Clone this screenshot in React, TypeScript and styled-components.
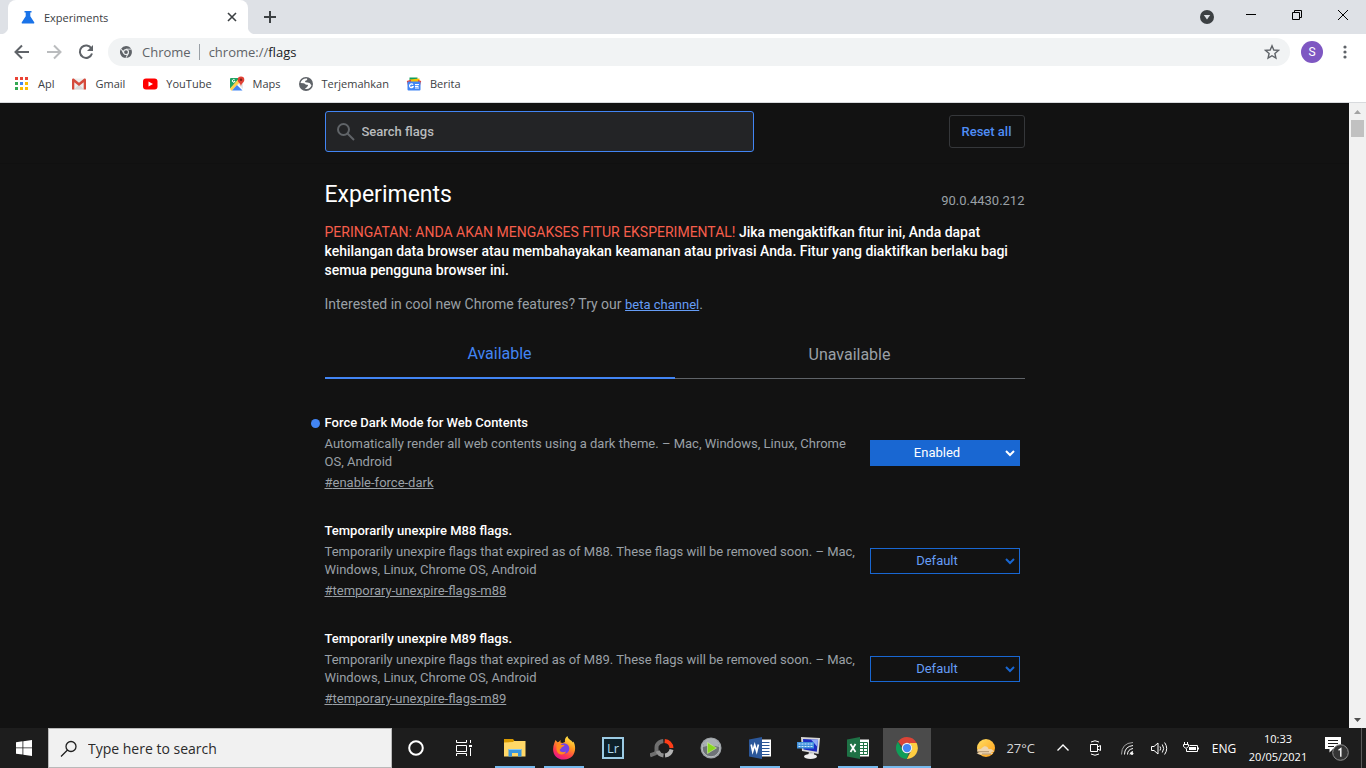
import React from "react";
import styled, { createGlobalStyle, css } from "styled-components";

const ui = `"Open Sans", "Noto Sans", sans-serif`;
const roboto = `Roboto, "Liberation Sans", sans-serif`;

const GlobalStyle = createGlobalStyle`
  * { box-sizing: border-box; }
  html, body, #root { height: 100%; margin: 0; }
  body { overflow: hidden; background: #121212; }
  button, input, select { font: inherit; color: inherit; }
  button { border: 0; padding: 0; background: none; }
  svg { display: block; flex: none; }
`;

const Screen = styled.div`
  height: 100vh;
  display: flex;
  flex-direction: column;
  font-family: ${ui};
`;

/* ---------- browser frame ---------- */

const TabStrip = styled.header`
  display: flex;
  height: 34px;
  flex: none;
  background: #dee1e6;
  color: #3c4043;
  font-size: 11px;
`;

const StripEdge = styled.div<{ $side: "left" | "right" }>`
  width: 8px;
  background: radial-gradient(
    circle at ${(p) => (p.$side === "left" ? "0 26px" : "8px 26px")},
    #dee1e6 8px,
    #ffffff 9px
  );
  background-clip: content-box;
  padding-top: 26px;
  background-origin: border-box;
`;

const Tab = styled.div`
  display: flex;
  align-items: center;
  width: 240px;
  padding: 0 10px 0 13px;
  gap: 9px;
  border-radius: 8px 8px 0 0;
  background: #ffffff;
`;

const TabTitle = styled.span`
  flex: 1;
`;

const StripButton = styled.button<{ $width: number }>`
  width: ${(p) => p.$width}px;
  display: flex;
  align-items: center;
  justify-content: center;
`;

const WindowButtons = styled.div`
  display: flex;
  margin-left: auto;
  height: 30px;
`;

const Toolbar = styled.div`
  display: flex;
  align-items: center;
  height: 36px;
  flex: none;
  padding: 0 14px;
  background: #ffffff;
`;

const NavButtons = styled.nav`
  display: flex;
  gap: 16px;
  margin-right: 14px;
`;

const Omnibox = styled.div`
  display: flex;
  align-items: center;
  flex: 1;
  height: 28px;
  padding: 0 10px 0 12px;
  border-radius: 14px;
  background: #f1f3f4;
  color: #5f6368;
  font-size: 13px;
`;

const SiteName = styled.span`
  margin-left: 10px;
  padding-right: 8px;
  line-height: 16px;
  border-right: 1px solid #9aa0a6;
`;

const Url = styled.span`
  flex: 1;
  margin-left: 9px;
  b {
    font-weight: 400;
    color: #202124;
  }
`;

const Avatar = styled.button`
  width: 22px;
  height: 22px;
  margin: 0 15px 0 11px;
  border-radius: 50%;
  background: #7e57c2;
  color: #ffffff;
  font-family: ${roboto};
  font-size: 12px;
`;

const Bookmarks = styled.nav`
  display: flex;
  align-items: center;
  height: 33px;
  flex: none;
  gap: 17px;
  padding: 0 14px 5px;
  background: #ffffff;
  border-bottom: 1px solid #d8dadd;
  color: #3c4043;
  font-size: 11px;
`;

const Bookmark = styled.a`
  display: flex;
  align-items: center;
  gap: 8px;
  color: inherit;
  text-decoration: none;
`;

/* ---------- flags page ---------- */

const Viewport = styled.div`
  display: flex;
  flex: 1;
  min-height: 0;
`;

const Page = styled.main`
  flex: 1;
  overflow: hidden;
  background: #121212;
  color: #9aa0a6;
  font-family: ${roboto};
`;

const Column = styled.div`
  width: 100%;
  max-width: 700px;
  margin: 0 auto;
`;

const SearchHeader = styled.div`
  padding: 8px 0 11px;
  border-bottom: 1px solid #101010;
`;

const SearchRow = styled(Column)`
  display: flex;
  align-items: center;
  justify-content: space-between;
`;

const SearchBox = styled.label`
  display: flex;
  align-items: center;
  gap: 6px;
  width: 429px;
  height: 41px;
  padding-left: 10px;
  border: 1px solid #4285f4;
  border-radius: 3px;
  background: #232426;
  color: #606468;
  input {
    flex: 1;
    min-width: 0;
    padding: 0;
    border: 0;
    outline: 0;
    background: none;
    color: #c4c7c9;
    font-size: 13px;
    font-weight: 500;
  }
  input::placeholder {
    color: #b9bbbd;
    opacity: 1;
  }
`;

const ResetButton = styled.button`
  width: 76px;
  height: 33px;
  border: 1px solid #35373a;
  border-radius: 3px;
  color: #4f8df5;
  font-size: 13px;
  font-weight: 500;
`;

const TitleRow = styled.div`
  display: flex;
  justify-content: space-between;
  align-items: flex-end;
  padding-top: 17px;
`;

const Title = styled.h1`
  margin: 0;
  color: #ffffff;
  font-size: 23px;
  line-height: 28px;
  font-weight: 400;
`;

const Version = styled.span`
  font-size: 13px;
  line-height: 16px;
`;

const Warning = styled.p`
  margin: 14px 0 0;
  color: #ffffff;
  font-size: 14px;
  line-height: 19px;
  font-weight: 500;
  span {
    color: #f75e4c;
    font-weight: 400;
  }
`;

const Promo = styled.p`
  margin: 15px 0 0;
  font-size: 14px;
  line-height: 19px;
  a {
    color: #669df6;
    font-size: 13px;
  }
`;

const Tabs = styled.div`
  display: flex;
  margin-top: 18px;
`;

const PageTab = styled.button<{ $active?: boolean }>`
  flex: 1;
  height: 47px;
  padding-bottom: 2px;
  font-size: 16px;
  ${(p) =>
    p.$active
      ? css`
          color: #4285f4;
          border-bottom: 2px solid #4285f4;
        `
      : css`
          color: #9aa0a6;
          border-bottom: 1px solid #5f6368;
        `}
`;

const FlagList = styled.div`
  padding-top: 35px;
`;

const Flag = styled.section`
  position: relative;
  display: flex;
  align-items: center;
  justify-content: space-between;
  margin-bottom: 30px;
  padding-right: 5px;
`;

const ChangedDot = styled.span`
  position: absolute;
  left: -14px;
  top: 5px;
  width: 9px;
  height: 9px;
  border-radius: 50%;
  background: #4285f4;
`;

const FlagText = styled.div`
  width: 534px;
  font-size: 13px;
  line-height: 18px;
  h2 {
    margin: 0 0 3px;
    color: #ffffff;
    font-size: 13px;
    line-height: 18px;
    font-weight: 500;
  }
  p {
    margin: 0 0 3px;
  }
  a {
    color: inherit;
  }
`;

const SelectWrap = styled.div<{ $changed?: boolean }>`
  position: relative;
  margin-bottom: 1px;
  color: ${(p) => (p.$changed ? "#ffffff" : "#1967d2")};
  svg {
    position: absolute;
    right: 4px;
    top: 8px;
    pointer-events: none;
  }
`;

const FlagSelect = styled.select<{ $changed?: boolean }>`
  display: block;
  appearance: none;
  width: 150px;
  height: 26px;
  padding: 0 15px 0 0;
  border: 1px solid #1967d2;
  border-radius: 0;
  background: ${(p) => (p.$changed ? "#1967d2" : "#121212")};
  color: ${(p) => (p.$changed ? "#ffffff" : "#669df6")};
  font-size: 13px;
  text-align: center;
  text-align-last: center;
`;

const Scrollbar = styled.div`
  display: flex;
  flex-direction: column;
  align-items: center;
  width: 17px;
  background: #f1f1f1;
`;

const ScrollArrow = styled.button`
  display: flex;
  align-items: center;
  justify-content: center;
  width: 17px;
  height: 17px;
`;

const Thumb = styled.div`
  width: 13px;
  height: 17px;
  margin-bottom: auto;
  background: #c1c1c1;
`;

/* ---------- taskbar ---------- */

const Taskbar = styled.footer`
  display: flex;
  height: 40px;
  flex: none;
  background: #1d1d1d;
  color: #ffffff;
`;

const TaskButton = styled.button<{ $running?: boolean; $active?: boolean }>`
  display: flex;
  align-items: center;
  justify-content: center;
  width: 48px;
  background: ${(p) => (p.$active ? "#4b4b4b" : "none")};
  ${(p) =>
    p.$running &&
    css`
      background: linear-gradient(#76b9ed, #76b9ed) 50% 100% / 40px 2px no-repeat;
    `}
  ${(p) => p.$active && css`box-shadow: inset 0 -2px #76b9ed;`}
`;

const TaskSearch = styled.label`
  display: flex;
  align-items: center;
  gap: 11px;
  width: 344px;
  padding-left: 11px;
  border: 1px solid #b9b9b9;
  background: #f1f1f1;
  color: #202020;
  input {
    flex: 1;
    min-width: 0;
    border: 0;
    padding: 0;
    outline: 0;
    background: none;
    font-size: 14px;
  }
  input::placeholder {
    color: #2b2b2b;
    opacity: 1;
  }
`;

const Apps = styled.div`
  display: flex;
  gap: 1px;
  margin-left: 3px;
`;

const Tray = styled.div`
  display: flex;
  align-items: center;
  margin-left: auto;
  font-size: 12px;
`;

const TrayButton = styled.button`
  display: flex;
  align-items: center;
  justify-content: center;
  width: 32px;
  height: 40px;
`;

const Weather = styled.button`
  display: flex;
  align-items: center;
  gap: 9px;
  margin-right: 12px;
  color: #d6d6d6;
  font-size: 13px;
`;

const Language = styled.button`
  width: 34px;
  font-size: 12px;
`;

const Clock = styled.button`
  width: 74px;
  font-size: 11px;
  line-height: 18px;
`;

const Notice = styled(TrayButton)`
  width: 47px;
  margin-right: 4px;
  padding: 2px 2px 0 0;
  border-right: 1px solid #5a5a5a;
`;

/* ---------- drawings ---------- */

const ChromeLogo = ({ size, mono }: { size: number; mono?: boolean }) => {
  const c = mono
    ? { r: "#5f6368", g: "#5f6368", y: "#5f6368", b: "#5f6368", w: "#f1f3f4" }
    : { r: "#db4437", g: "#0f9d58", y: "#ffcd40", b: "#4285f4", w: "#f1f1f1" };
  return (
    <svg width={size} height={size} viewBox="0 0 48 48">
      <path fill={c.r} d="M24 0a24 24 0 0 1 21 13H24a11 11 0 0 0-10.300 7.200L4.200 10.500A24 24 0 0 1 24 0Z" />
      <path fill={c.y} d="M45 13A24 24 0 0 1 23.500 48l10-18.500A11 11 0 0 0 30 15V13Z" />
      <path fill={c.g} d="M4.200 10.500 14.500 29.500A11 11 0 0 0 27.500 34.500L23.500 48A24 24 0 0 1 4.200 10.500Z" />
      {mono && (
        <path d="M24 12.500H45M14 29.500 4 11M34 29.500 23.500 48" stroke={c.w} strokeWidth="3" fill="none" />
      )}
      <circle cx="24" cy="24" r="11.500" fill={c.w} />
      <circle cx="24" cy="24" r={mono ? 7.5 : 9} fill={c.b} />
    </svg>
  );
};

const Flask = () => (
  <svg width="14" height="14" viewBox="0 0 14 14" fill="#1a73e8">
    <path d="M3.500 1h7v1.500H9.300v3.700l3.900 6c.4.800 0 1.300-.8 1.300H1.600c-.8 0-1.200-.5-.8-1.300l3.900-6V2.500H3.500Z" />
  </svg>
);

const AppsGrid = () => (
  <svg width="16" height="16" viewBox="0 0 16 16" shapeRendering="crispEdges">
    {["#ea4335", "#ea4335", "#ea4335", "#34a853", "#4285f4", "#fbbc04", "#34a853", "#fbbc04", "#fbbc04"].map((f, i) => (
      <rect key={i} x={(i % 3) * 5 + 1} y={Math.floor(i / 3) * 5 + 1} width="3" height="3" fill={f} />
    ))}
  </svg>
);

const Gmail = () => (
  <svg width="16" height="16" viewBox="0 0 16 16">
    <path fill="#eeeeee" d="M2 2.500h12v11H2z" />
    <path fill="#d9d9d9" d="m3 13.500 5-5 5 5z" />
    <path fill="#d54b3d" d="M1 4c0-1.300 1-1.800 2-1.200l5 4 5-4c1-.6 2-.1 2 1.200v9.500h-2.300V6.200L8 10 3.300 6.200v7.300H1z" />
  </svg>
);

const YouTube = () => (
  <svg width="16" height="16" viewBox="0 0 16 16">
    <rect x="1" y="2.500" width="14.500" height="11" rx="3" fill="#ff0000" />
    <path fill="#fff" d="M6.500 5.500v5L11 8z" />
  </svg>
);

const MapsIcon = () => (
  <svg width="16" height="16" viewBox="0 0 16 16">
    <path fill="#1fa463" d="M1 3a1 1 0 0 1 1-1h9L1 13z" />
    <path fill="#e8e8e8" d="m11 2 3 0v11L8 7.500 2 14l-1-1z" />
    <path fill="#ffd04c" d="M1 12.500 9.500 3l2 2.500L3 14.500H2z" />
    <path fill="#4285f4" d="m8 9 5.500 5.500H3z" />
    <path fill="none" stroke="#fff" d="M5.800 4A1.400 1.400 0 1 0 6 5.500H4.700" />
    <path fill="#e24134" d="M12 .5a3.300 3.300 0 0 1 3.300 3.300C15.300 6.500 12.500 7 12 10.500 11.500 7 8.700 6.500 8.700 3.800A3.300 3.300 0 0 1 12 .5Z" />
    <circle cx="12" cy="3.800" r="1.200" fill="#7c2018" />
  </svg>
);

const Globe = () => (
  <svg width="16" height="16" viewBox="0 0 16 16">
    <circle cx="8" cy="8" r="7" fill="#5f6368" />
    <path fill="#fff" d="M9 2.500C6 2 3 4 2.500 7l3 .2c1.500.2 1.700 1.600 3 1.500 1.200-.2 1.500.3 1.500 1.300l-1 .8c-.2 1.200-1.500 1-2 2 3.500.8 6-1 6.500-3.800-1-.2-1-1.500-2-2L9.500 6.500l-2-.2c-.8-.6-.3-1.600.5-1.800 1 0 1.500-.8 1-2Z" />
  </svg>
);

const News = () => (
  <svg width="16" height="16" viewBox="0 0 16 16">
    <path fill="#0f9d58" d="M3.500 1.500h8v5h-8z" />
    <path fill="#fbbc04" d="m4 3.500 9.500-1V8H4z" />
    <path fill="#ea4335" d="M.8 5 5 3.800V9L2 9.500zM15.200 5 12 4v5l2 .5z" />
    <rect x="1.500" y="5.500" width="13" height="9" rx="1" fill="#4285f4" />
    <path fill="none" stroke="#fff" strokeWidth="1.200" d="M7 8.700A1.900 1.900 0 1 0 7.200 10.500H5.500M9 8.500h4M9 10.300h3.500M9 12h4" />
  </svg>
);

const Line = ({ d, size = 16, w = 2, color = "#5f6368" }: { d: string; size?: number; w?: number; color?: string }) => (
  <svg width={size} height={size} viewBox={`0 0 ${size} ${size}`} fill="none" stroke={color} strokeWidth={w}>
    <path d={d} />
  </svg>
);

const Reload = () => (
  <svg width="16" height="16" viewBox="0 0 16 16">
    <path fill="none" stroke="#5f6368" strokeWidth="2" d="M13.400 4.500A6.200 6.200 0 1 0 14 9.500" />
    <path fill="#5f6368" d="M15 1v6H9z" />
  </svg>
);

const Explorer = () => (
  <svg width="22" height="20" viewBox="0 0 22 20">
    <path fill="#d99a00" d="M0 1h9l1.500 2H21v4H0z" />
    <path fill="#ffd868" d="M0 4.500 9 4l1-1h11.500v15.500H0z" />
    <path fill="#3a96dd" d="M4.500 11h13v7.500H14V15H8v3.500H4.500z" />
    <path fill="#8acbf5" d="M4.500 11h13v1h-13z" />
  </svg>
);

const Firefox = () => (
  <svg width="24" height="24" viewBox="0 0 24 24">
    <defs>
      <linearGradient id="fx" x1=".8" y1="0" x2=".3" y2="1">
        <stop offset="0" stopColor="#fff44f" />
        <stop offset=".4" stopColor="#ff9a1f" />
        <stop offset=".75" stopColor="#ff3750" />
        <stop offset="1" stopColor="#e3158a" />
      </linearGradient>
    </defs>
    <path fill="url(#fx)" d="M2.500 6.500 3.500 4l2 2.200 1.500-.4L8.500 4v2.500l2 .5L13 6c-.5-2.500.5-4.500 2.500-6 0 3 4 4 5.500 6.500l.5-1c4 8 .5 18-9.500 18S-1 15 2.500 6.500Z" />
    <circle cx="12" cy="12.500" r="5.300" fill="#7542e5" />
    <path fill="#ff8a1c" d="M4.500 8.500c2-1.200 4-.6 5 .5h3c-.2 1.500-2.500 1.500-3 2.500 0 1-1.500 1.500-1.800 2.500.5 2.500 4 2.700 6.300 1.500-1.500 4.500-8.500 4-9.500-1.500Z" />
  </svg>
);

const LrBox = styled.span`
  display: flex;
  align-items: center;
  justify-content: center;
  width: 22px;
  height: 22px;
  border: 2px solid #9ccbe4;
  background: #0d2029;
  color: #b4dcf0;
  font-size: 13px;
  line-height: 16px;
`;

const Ring = () => (
  <svg width="24" height="22" viewBox="0 0 24 22" fill="none" strokeWidth="4">
    <path stroke="#6f6f6f" d="M0 18.500 5 16.500C8 15 5.500 11 7 8A8 8 0 0 1 13.300 4" />
    <path stroke="#ff3d17" d="M14.700 4A7.500 7.500 0 0 1 21.500 11" />
    <path stroke="#b4b4b4" d="M21.500 12.500A7.500 7.500 0 0 1 15 18.500" />
    <path stroke="#929292" d="M13.500 18.500A7.500 7.500 0 0 1 7.500 14" />
  </svg>
);

const PlayDisc = () => (
  <svg width="22" height="22" viewBox="0 0 22 22">
    <circle cx="11" cy="11" r="10.500" fill="#9da2a6" />
    <circle cx="11" cy="11" r="8.800" fill="#6e7377" stroke="#b9bdc0" />
    <path fill="#a9afb3" d="M3 10a8 8 0 0 1 16 0Q11 7 3 10Z" />
    <path fill="#88d81f" stroke="#d2efa2" strokeWidth=".6" d="M7.500 5.500v11L16.500 11z" />
  </svg>
);

const Office = ({ color, dark, letter }: { color: string; dark: string; letter: string }) => (
  <svg width="24" height="24" viewBox="0 0 24 24">
    <path fill="#fff" d="M12 3.500h11v17H12z" />
    {letter === "W" ? (
      <path stroke={color} d="M14 6.500h7.500M14 9.500h7.500M14 12.500h7.500M14 15.500h7.500M14 18.500h7.500" />
    ) : (
      <path stroke={color} fill="none" d="M14 6.500h7.500v12H14M14 9.500h7.500M14 12.500h7.500M14 15.500h7.500M17.500 6v12.500" />
    )}
    <path fill={dark} d="m1 3.500 13-2.500v22L1 20.500z" />
    <path
      fill="none"
      stroke="#fff"
      strokeWidth="1.700"
      d={letter === "W" ? "m3.200 8.500 1.500 7 2-6.500 2 6.500 1.700-7" : "m4.500 8 5 8M9.500 8l-5 8"}
    />
  </svg>
);

const Computer = () => (
  <svg width="24" height="24" viewBox="0 0 24 24">
    <path fill="#d7d7d7" d="m4 1 19 1-1.500 16L5 15z" />
    <path fill="#1b2bc0" d="m6 3 15 .7-1.200 12L6.500 13.500z" />
    <path fill="#91a9f5" d="m14 3.400 7 .3-.7 7z" />
    <path fill="#d5d5d5" d="m12 16 5 1v3h-6z" />
    <ellipse cx="13.500" cy="20.500" rx="6.500" ry="2.500" fill="#eeeeee" />
    <rect x="0" y="6" width="17" height="6.500" fill="#3f90db" />
    <path stroke="#d3ecff" strokeWidth="1.200" strokeDasharray="2 1" d="M1.500 8h14M1.500 10.500h14" />
  </svg>
);

const SunCloud = () => (
  <svg width="21" height="20" viewBox="0 0 21 20">
    <defs>
      <linearGradient id="sun" x1="0" y1="0" x2="1" y2="1">
        <stop offset="0" stopColor="#ffdf64" />
        <stop offset="1" stopColor="#ff9d16" />
      </linearGradient>
    </defs>
    <circle cx="10" cy="10" r="9" fill="url(#sun)" />
    <path fill="#efd5ae" d="M2 11q2 1 4-1c2-3 6-2 6.500 1l3 .2 3 2.300-4 .5 3 1.500-5 1H3L.5 15l4-1-3.500-.5z" />
    <path stroke="#a08361" strokeWidth=".8" d="M2 13.700h11M6 16h9" />
  </svg>
);

const NoticeIcon = () => (
  <svg width="26" height="26" viewBox="0 0 26 26">
    <path fill="#fff" d="M1 1h16v12H9l-3.500 3.500V13H1z" />
    <path stroke="#1d1d1d" d="M4 4.500h10M4 7.500h10M4 10.500h6" />
    <circle cx="16.500" cy="16.500" r="7.800" fill="#353535" stroke="#8f8f8f" />
    <path fill="none" stroke="#fff" strokeWidth="1.400" d="m14.500 14.300 2.300-1.600v8" />
  </svg>
);

/* ---------- data ---------- */

const bookmarks = [
  { name: "Apl", icon: <AppsGrid /> },
  { name: "Gmail", icon: <Gmail /> },
  { name: "YouTube", icon: <YouTube /> },
  { name: "Maps", icon: <MapsIcon /> },
  { name: "Terjemahkan", icon: <Globe /> },
  { name: "Berita", icon: <News /> },
];

const flags = [
  {
    id: "enable-force-dark",
    name: "Force Dark Mode for Web Contents",
    text: "Automatically render all web contents using a dark theme. – Mac, Windows, Linux, Chrome OS, Android",
    value: "Enabled",
  },
  {
    id: "temporary-unexpire-flags-m88",
    name: "Temporarily unexpire M88 flags.",
    text: "Temporarily unexpire flags that expired as of M88. These flags will be removed soon. – Mac, Windows, Linux, Chrome OS, Android",
    value: "Default",
  },
  {
    id: "temporary-unexpire-flags-m89",
    name: "Temporarily unexpire M89 flags.",
    text: "Temporarily unexpire flags that expired as of M89. These flags will be removed soon. – Mac, Windows, Linux, Chrome OS, Android",
    value: "Default",
  },
];

export default function App() {
  return (
    <Screen>
      <GlobalStyle />
      <TabStrip>
        <StripEdge $side="left" />
        <Tab>
          <Flask />
          <TabTitle>Experiments</TabTitle>
          <StripButton $width={12} aria-label="Close tab">
            <Line size={12} w={1.6} color="#3c4043" d="m2 2 8 8M10 2l-8 8" />
          </StripButton>
        </Tab>
        <StripEdge $side="right" />
        <StripButton $width={28} aria-label="New tab">
          <Line size={12} color="#3c4043" d="M6 0v12M0 6h12" />
        </StripButton>
        <WindowButtons>
          <StripButton $width={42} aria-label="Tab search">
            <svg width="14" height="18" viewBox="0 0 14 18">
              <circle cx="7" cy="11" r="7" fill="#3c4043" />
              <path fill="#dee1e6" d="M3.800 9h6.400L7 13.500z" />
            </svg>
          </StripButton>
          <StripButton $width={46} aria-label="Minimize">
            <Line size={10} w={1} color="#000" d="M0 4.500h10" />
          </StripButton>
          <StripButton $width={46} aria-label="Restore">
            <Line size={10} w={1} color="#000" d="M.5 2.500h7v7h-7zM2.500 2.500v-2h7v7h-2" />
          </StripButton>
          <StripButton $width={46} aria-label="Close">
            <Line size={10} w={1} color="#000" d="m0 0 10 10M10 0 0 10" />
          </StripButton>
        </WindowButtons>
      </TabStrip>

      <Toolbar>
        <NavButtons>
          <button aria-label="Back">
            <Line d="M15 8H2M8 1.500 1.500 8 8 14.500" />
          </button>
          <button aria-label="Forward">
            <Line color="#babcbe" d="M1 8h13M8 1.500 14.500 8 8 14.500" />
          </button>
          <button aria-label="Reload">
            <Reload />
          </button>
        </NavButtons>
        <Omnibox>
          <ChromeLogo size={12} mono />
          <SiteName>Chrome</SiteName>
          <Url>
            chrome://<b>flags</b>
          </Url>
          <button aria-label="Bookmark this page">
            <Line w={1.4} d="M8 1.800 9.800 6l4.600.4-3.500 3.100 1 4.500L8 11.700 4.100 14l1-4.500L1.600 6.400 6.200 6z" />
          </button>
        </Omnibox>
        <Avatar aria-label="Profile">S</Avatar>
        <button aria-label="Menu">
          <svg width="14" height="16" viewBox="0 0 14 16" fill="#5f6368">
            <circle cx="7" cy="3" r="1.600" />
            <circle cx="7" cy="8" r="1.600" />
            <circle cx="7" cy="13" r="1.600" />
          </svg>
        </button>
      </Toolbar>

      <Bookmarks>
        {bookmarks.map((b) => (
          <Bookmark key={b.name} href="#">
            {b.icon}
            {b.name}
          </Bookmark>
        ))}
      </Bookmarks>

      <Viewport>
        <Page>
          <SearchHeader>
            <SearchRow>
              <SearchBox>
                <svg width="20" height="20" viewBox="0 0 20 20" fill="none" stroke="currentColor" strokeWidth="2">
                  <circle cx="7.500" cy="7.500" r="5.500" />
                  <path d="m11.500 11.500 6.500 6.500" />
                </svg>
                <input placeholder="Search flags" aria-label="Search flags" />
              </SearchBox>
              <ResetButton>Reset all</ResetButton>
            </SearchRow>
          </SearchHeader>
          <Column>
            <TitleRow>
              <Title>Experiments</Title>
              <Version>90.0.4430.212</Version>
            </TitleRow>
            <Warning>
              <span>PERINGATAN: ANDA AKAN MENGAKSES FITUR EKSPERIMENTAL!</span> Jika mengaktifkan fitur ini, Anda dapat
              kehilangan data browser atau membahayakan keamanan atau privasi Anda. Fitur yang diaktifkan berlaku bagi
              semua pengguna browser ini.
            </Warning>
            <Promo>
              Interested in cool new Chrome features? Try our <a href="#beta">beta channel</a>.
            </Promo>
            <Tabs role="tablist">
              <PageTab role="tab" aria-selected="true" $active>
                Available
              </PageTab>
              <PageTab role="tab" aria-selected="false">
                Unavailable
              </PageTab>
            </Tabs>
            <FlagList>
              {flags.map((f) => {
                const changed = f.value === "Enabled";
                return (
                  <Flag key={f.id}>
                    {changed && <ChangedDot />}
                    <FlagText>
                      <h2>{f.name}</h2>
                      <p>{f.text}</p>
                      <a href={`#${f.id}`}>#{f.id}</a>
                    </FlagText>
                    <SelectWrap $changed={changed}>
                      <FlagSelect $changed={changed} defaultValue={f.value} aria-label={f.name}>
                        <option>Default</option>
                        <option>Enabled</option>
                        <option>Disabled</option>
                      </FlagSelect>
                      <Line size={12} color="currentColor" d="m2 3 4 4 4-4" />
                    </SelectWrap>
                  </Flag>
                );
              })}
            </FlagList>
          </Column>
        </Page>
        <Scrollbar>
          <ScrollArrow aria-label="Scroll up">
            <svg width="7" height="4" viewBox="0 0 7 4" fill="#a3a3a3">
              <path d="M0 4 3.500 0 7 4z" />
            </svg>
          </ScrollArrow>
          <Thumb />
          <ScrollArrow aria-label="Scroll down">
            <svg width="7" height="4" viewBox="0 0 7 4" fill="#505050">
              <path d="m0 0 3.500 4L7 0z" />
            </svg>
          </ScrollArrow>
        </Scrollbar>
      </Viewport>

      <Taskbar>
        <TaskButton aria-label="Start">
          <svg width="16" height="16" viewBox="0 0 16 16" fill="#fff">
            <path d="M0 2.200 6.500 1.300v6.200H0zM7.300 1.200 16 0v7.500H7.300zM0 8.300h6.500v6.300L0 13.700zM7.300 8.300H16V16l-8.700-1.300z" />
          </svg>
        </TaskButton>
        <TaskSearch>
          <Line w={1.3} color="#202020" d="M16 6.500a5 5 0 1 1-10 0a5 5 0 0 1 10 0M7.500 10 1 16.500" size={17} />
          <input placeholder="Type here to search" aria-label="Type here to search" />
        </TaskSearch>
        <TaskButton aria-label="Cortana">
          <svg width="16" height="16" viewBox="0 0 16 16" fill="none" stroke="#fff" strokeWidth="2">
            <circle cx="8" cy="8" r="6.800" />
          </svg>
        </TaskButton>
        <TaskButton aria-label="Task view">
          <Line w={1} color="#fff" d="M.5 0v2.500h10V0M.500 5.500h10v6H.500zM.500 16v-2.500h10V16M14.500 0v3M14.500 8v8M13 5.500h3M13 6.500h3" />
        </TaskButton>
        <Apps>
          <TaskButton $running aria-label="File Explorer">
            <Explorer />
          </TaskButton>
          <TaskButton $running aria-label="Firefox">
            <Firefox />
          </TaskButton>
          <TaskButton aria-label="Lightroom">
            <LrBox>Lr</LrBox>
          </TaskButton>
          <TaskButton aria-label="Disk tool">
            <Ring />
          </TaskButton>
          <TaskButton aria-label="Media player">
            <PlayDisc />
          </TaskButton>
          <TaskButton $running aria-label="Word">
            <Office color="#2b5797" dark="#2b579a" letter="W" />
          </TaskButton>
          <TaskButton aria-label="On-screen keyboard">
            <Computer />
          </TaskButton>
          <TaskButton $running aria-label="Excel">
            <Office color="#217346" dark="#1e7145" letter="X" />
          </TaskButton>
          <TaskButton $active aria-label="Chrome">
            <ChromeLogo size={22} />
          </TaskButton>
        </Apps>
        <Tray>
          <Weather>
            <SunCloud />
            27°C
          </Weather>
          <TrayButton aria-label="Show hidden icons">
            <Line size={12} w={1.4} color="#fff" d="m.5 8.500 5.500-5.500 5.500 5.500" />
          </TrayButton>
          <TrayButton aria-label="Meet now">
            <Line w={1} color="#fff" d="M3.500 4.500h7v7h-7zM10.500 7l3-1.500v5l-3-1.500M4 2q4-2.500 8 0M4 14q4 2.500 8 0" />
          </TrayButton>
          <TrayButton aria-label="Network">
            <svg width="14" height="14" viewBox="0 0 14 14" fill="none" stroke="#fff">
              <path stroke="#a0a0a0" d="M1.500 13.500Q1.500 2 13 1.500" />
              <path d="M4.500 13.500Q4.500 5.500 13 4.500M7.500 13.500Q7.500 8.500 13 7.500M10 13.500Q10 11 13 10.500" />
              <circle cx="12" cy="12.500" r="1" fill="#fff" />
            </svg>
          </TrayButton>
          <TrayButton aria-label="Volume">
            <Line size={17} w={1} color="#fff" d="M.5 6.500h2.500l4-3.500v11l-4-3.500H.5zM9 6.500q1.300 2 0 4M11.300 4.500q2.800 4 0 8M13.600 2.500q4.200 6 0 12" />
          </TrayButton>
          <TrayButton aria-label="Battery">
            <svg width="16" height="14" viewBox="0 0 16 14" fill="none" stroke="#fff">
              <path d="M6.500 4.500h8v6h-11V8M15.500 6.500v2M1.500 1v2M4.500 1v2M.5 3.500h5v2l-2.500 2-2.500-2z" />
              <path fill="#fff" stroke="none" d="M6 6h7v3H6z" />
            </svg>
          </TrayButton>
          <Language>ENG</Language>
          <Clock>
            10:33
            <br />
            20/05/2021
          </Clock>
          <Notice aria-label="Notifications, 1 new">
            <NoticeIcon />
          </Notice>
        </Tray>
      </Taskbar>
    </Screen>
  );
}
